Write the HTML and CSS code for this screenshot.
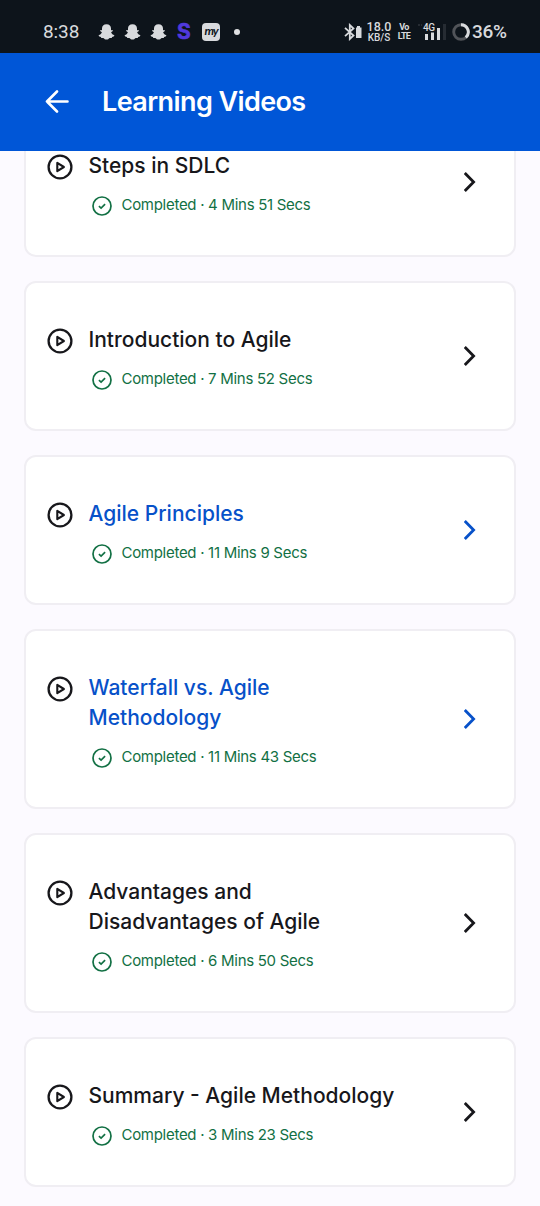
FILE: index.html
```html
<!DOCTYPE html>
<html lang="en">
<head>
<meta charset="utf-8">
<meta name="viewport" content="width=device-width, initial-scale=1">
<title>Learning Videos</title>
<link rel="stylesheet" href="styles.css">
</head>
<body>
<svg class="defs" aria-hidden="true">
  <symbol id="play" viewBox="0 0 26 26"><circle cx="13" cy="13" r="11.4" fill="none" stroke="currentColor" stroke-width="2.3"/><path d="M10.3 8.8v8.4l6.6-4.2z" fill="none" stroke="currentColor" stroke-width="2.1" stroke-linejoin="round"/></symbol>
  <symbol id="check" viewBox="0 0 20 20"><circle cx="10" cy="10" r="9" fill="none" stroke="currentColor" stroke-width="1.7"/><path d="M6.9 10.1l2.2 2 4-3.9" fill="none" stroke="currentColor" stroke-width="1.7"/></symbol>
  <symbol id="chevron" viewBox="0 0 12 20"><path d="M.8 1L9.600 10l-8.800 9" fill="none" stroke="currentColor" stroke-width="2.800"/></symbol>
  <symbol id="ghost" viewBox="0 0 16 16"><path d="M8 .3c2.900 0 4.500 1.800 4.500 4.300v1.700l1.500-.2.400.8-1.800 1.400c.6 1.600 1.700 2.500 3.300 3-.2 1.200-1.100 1.500-2.300 1.700l-.4 1-2-.1C10.200 14.700 9.300 15.600 8 15.600s-2.200-.9-3.200-1.700l-2 .1-.4-1c-1.200-.2-2.100-.5-2.300-1.700 1.600-.5 2.700-1.400 3.300-3L1.600 6.900l.4-.8 1.500.2V4.600C3.500 2.100 5.100.3 8 .3z" fill="currentColor"/></symbol>
</svg>

<div class="status">
  <span class="clock">8:38</span>
  <div class="notices">
    <svg class="ghost"><use href="#ghost"/></svg>
    <svg class="ghost"><use href="#ghost"/></svg>
    <svg class="ghost"><use href="#ghost"/></svg>
    <b class="s-app">S</b>
    <span class="my-app">my</span>
    <i class="more"></i>
  </div>
  <div class="system">
    <svg class="bluetooth" viewBox="0 0 18 18"><path d="M1 4.800l8.500 7.700L5.800 16V2l3.700 3.500L1 13.200" fill="none" stroke="currentColor" stroke-width="1.800"/><path d="M13 3h3v1.500h1.500v10.500h-5.500v-10.500h1z" fill="currentColor"/></svg>
    <span class="speed"><b>18.0</b><small>KB/S</small></span>
    <span class="volte"><b>Vo</b><b>LTE</b></span>
    <svg class="signal" viewBox="0 0 28 20"><path d="M7 12h3v6H7zM13 10.500h3V18h-3zM19 6h3v12h-3z" fill="currentColor"/><path d="M25 2h3v16h-3zM0 2h2v2H0zM3 2h1v2H3z" fill="#262c33"/><text x="5" y="9">4G</text></svg>
    <svg class="battery" viewBox="0 0 18 18"><circle cx="9" cy="9" r="7.300" fill="none" stroke="#515459" stroke-width="2.900"/><path d="M9 1.700A7.300 7.300 0 0 1 13.800 14.500" fill="none" stroke="currentColor" stroke-width="2.900"/></svg>
    <span class="percent">36%</span>
  </div>
</div>

<header class="topbar">
  <svg class="back" viewBox="0 0 24 24"><path d="M22.500 11.500H2M12 1.500l-10 10 10 10" fill="none" stroke="currentColor" stroke-width="2.600" stroke-linecap="round" stroke-linejoin="round"/></svg>
  <h1>Learning Videos</h1>
</header>

<main class="viewport">
  <div class="list">
    <article class="card">
      <svg class="play"><use href="#play"/></svg>
      <div class="info"><h2>Steps in SDLC</h2><p><svg class="check"><use href="#check"/></svg><span>Completed · 4 Mins 51 Secs</span></p></div>
      <svg class="chevron"><use href="#chevron"/></svg>
    </article>
    <article class="card">
      <svg class="play"><use href="#play"/></svg>
      <div class="info"><h2>Introduction to Agile</h2><p><svg class="check"><use href="#check"/></svg><span>Completed · 7 Mins 52 Secs</span></p></div>
      <svg class="chevron"><use href="#chevron"/></svg>
    </article>
    <article class="card linked">
      <svg class="play"><use href="#play"/></svg>
      <div class="info"><h2>Agile Principles</h2><p><svg class="check"><use href="#check"/></svg><span>Completed · 11 Mins 9 Secs</span></p></div>
      <svg class="chevron"><use href="#chevron"/></svg>
    </article>
    <article class="card linked">
      <svg class="play"><use href="#play"/></svg>
      <div class="info"><h2>Waterfall vs. Agile<br>Methodology</h2><p><svg class="check"><use href="#check"/></svg><span>Completed · 11 Mins 43 Secs</span></p></div>
      <svg class="chevron"><use href="#chevron"/></svg>
    </article>
    <article class="card">
      <svg class="play"><use href="#play"/></svg>
      <div class="info"><h2>Advantages and<br>Disadvantages of Agile</h2><p><svg class="check"><use href="#check"/></svg><span>Completed · 6 Mins 50 Secs</span></p></div>
      <svg class="chevron"><use href="#chevron"/></svg>
    </article>
    <article class="card">
      <svg class="play"><use href="#play"/></svg>
      <div class="info"><h2>Summary - Agile Methodology</h2><p><svg class="check"><use href="#check"/></svg><span>Completed · 3 Mins 23 Secs</span></p></div>
      <svg class="chevron"><use href="#chevron"/></svg>
    </article>
  </div>
</main>
</body>
</html>
```
FILE: styles.css
```css
* { box-sizing: border-box; }
html { overflow: hidden; }
body {
  margin: 0;
  height: 1206px;
  display: flex;
  flex-direction: column;
  overflow: hidden;
  background: #fcfaff;
  color: #17171b;
  font-family: Inter, "Liberation Sans", sans-serif;
}
svg { display: block; flex: none; }
.defs { display: none; }
h1, h2, p { margin: 0; font-weight: 400; }

.status {
  flex: none;
  height: 53px;
  padding: 10px 32px 0 43px;
  display: flex;
  align-items: center;
  background: #0d141b;
  color: #d8dadd;
}
.clock { width: 55px; font: 400 19px/24px Roboto, sans-serif; letter-spacing: -.1px; }
.notices { display: flex; align-items: center; }
.ghost { width: 17px; height: 16px; margin-right: 9px; }
.s-app { width: 16px; margin-right: 10px; color: #5039dc; font: 700 21px/22px Inter, sans-serif; text-align: center; -webkit-text-stroke: .6px #5039dc; }
.my-app {
  width: 18px;
  height: 18px;
  border-radius: 4px;
  background: #d8dadd;
  color: #0d141b;
  font: italic 700 12px/15px Lato, sans-serif;
  text-align: center;
  letter-spacing: -1px;
}
.more { width: 6px; height: 6px; margin-left: 14px; border-radius: 50%; background: #e0e1e3; }
.system { display: flex; align-items: center; margin-left: auto; }
.bluetooth { width: 18px; height: 18px; margin-right: 5px; }
.speed, .volte { display: flex; flex-direction: column; align-items: center; font-family: Roboto, sans-serif; }
.speed { width: 24px; margin-right: 7px; }
.speed b { font-size: 12.500px; line-height: 12px; font-weight: 500; }
.speed small { font-size: 10px; line-height: 9px; font-weight: 500; }
.volte { width: 12px; margin-right: 8px; }
.volte b { font-size: 9px; line-height: 9px; letter-spacing: -.7px; }
.signal { width: 28px; height: 20px; margin-right: 6px; overflow: visible; }
.signal text { font: 500 10px Roboto, sans-serif; letter-spacing: -.4px; fill: #d8dadd; }
.battery { width: 18px; height: 18px; margin-right: 2px; }
.percent { width: 36px; font: 500 19px/24px Roboto, sans-serif; letter-spacing: -.3px; }

.topbar {
  flex: none;
  height: 98px;
  padding: 0 0 0 45px;
  display: flex;
  align-items: center;
  gap: 33px;
  background: #0056d7;
  color: #fff;
}
.back { width: 24px; height: 24px; }
h1 { font-size: 27px; line-height: 36px; font-weight: 600; letter-spacing: -.6px; }

.viewport { flex: 1; min-height: 0; overflow: hidden; padding: 0 24px; }
/* The list is shown part-way through its scroll range. */
.list { display: flex; flex-direction: column; gap: 24px; margin-top: -44px; }
.card {
  display: flex;
  align-items: flex-start;
  padding: 42px 38px 38px 21px;
  border: 2px solid #f0eef3;
  border-radius: 12px;
  background: #fff;
}
.play { width: 26px; height: 26px; margin-top: 3px; }
.info { flex: 1; margin-left: 15.500px; }
h2 { font-size: 21px; line-height: 30px; font-weight: 500; white-space: nowrap; }
p { display: flex; align-items: center; gap: 10px; height: 22px; margin: 14px 0 0 3px; color: #127044; font-size: 15px; line-height: 20px; letter-spacing: -.29px; white-space: nowrap; }
p span { margin-top: -3px; }
.check { width: 20px; height: 20px; }
.chevron { width: 12px; height: 20px; align-self: center; margin-top: -4px; }
.linked h2, .linked .chevron { color: #0751c9; }
```
